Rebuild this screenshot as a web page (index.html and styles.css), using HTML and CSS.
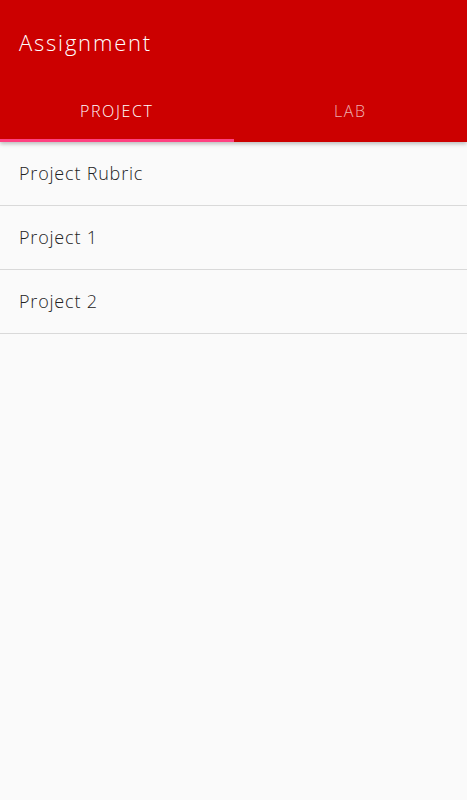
FILE: index.html
```html
<!DOCTYPE html>
<html lang="en">
<head>
    <meta charset="UTF-8">
    <meta name="viewport" content="width=device-width, initial-scale=1.0">
    <title>Assignment</title>
    <link rel="stylesheet" href="styles.css">
</head>
<body>

    <header class="app-bar">
        <h1 class="title">Assignment</h1>
        <nav class="tabs">
            <div class="tab active">PROJECT</div>
            <div class="tab">LAB</div>
        </nav>
    </header>

    <ul class="list">
        <li class="item">Project Rubric</li>
        <li class="item">Project 1</li>
        <li class="item">Project 2</li>
    </ul>

</body>
</html>
```

FILE: styles.css
```css
body {
    margin: 0;
    font-family: "Open Sans", Arial, sans-serif;
    background-color: #fafafa;
    height: 800px;
}

.app-bar {
    background-color: #cc0000;
    color: #fff;
    box-shadow: 0 2px 4px rgba(0, 0, 0, 0.25);
    position: relative;
}

.title {
    margin: 0;
    height: 86px;
    padding-left: 19px;
    padding-bottom: 2px;
    box-sizing: border-box;
    display: flex;
    align-items: center;
    font-size: 22px;
    font-weight: 300;
    letter-spacing: 1.8px;
}

.tabs {
    display: flex;
    height: 56px;
}

.tab {
    flex: 1;
    display: flex;
    align-items: center;
    justify-content: center;
    font-size: 16px;
    font-weight: 300;
    letter-spacing: 1.6px;
    color: rgba(255, 255, 255, 0.7);
    border-bottom: 3px solid transparent;
    padding-bottom: 3px;
}

.tab.active {
    color: #fff;
    border-bottom-color: #ff4081;
}

.list {
    list-style: none;
    margin: 0;
    padding: 0;
}

.item {
    height: 61px;
    padding-bottom: 2px;
    border-bottom: 1px solid #d9d9d9;
    display: flex;
    align-items: center;
    padding-left: 19px;
    font-size: 18px;
    font-weight: 300;
    letter-spacing: 0.8px;
    color: #222;
}
```
